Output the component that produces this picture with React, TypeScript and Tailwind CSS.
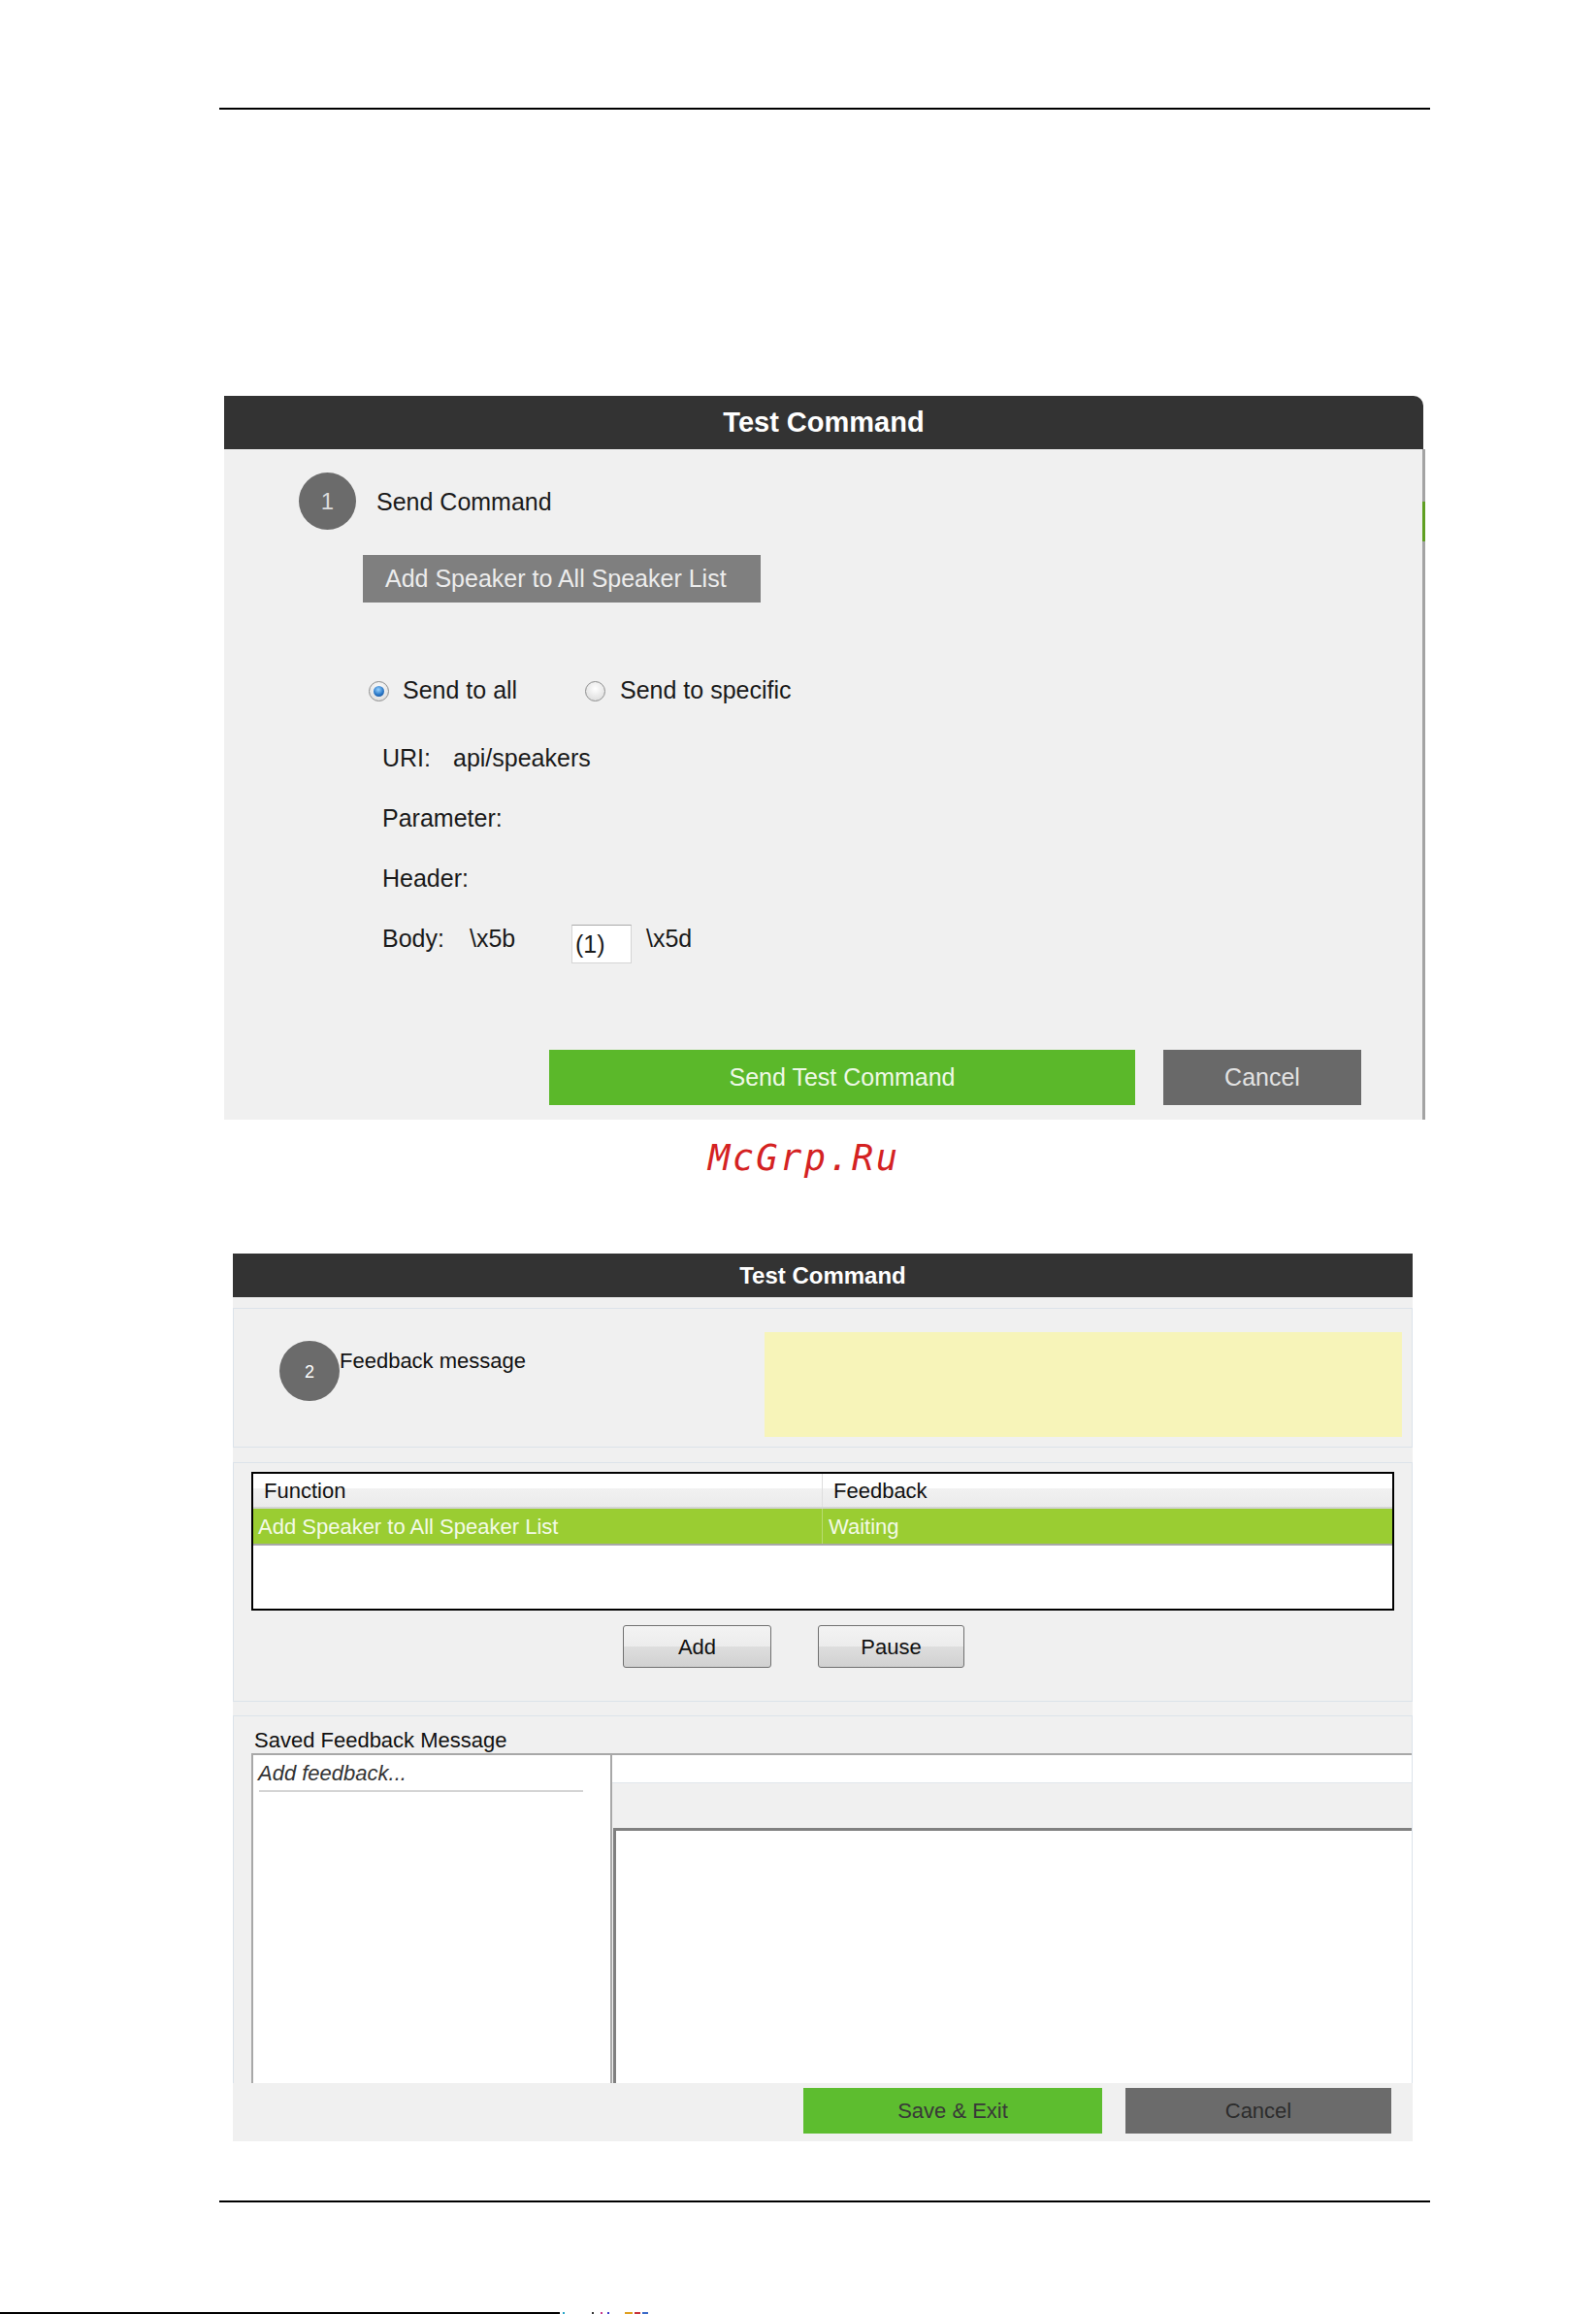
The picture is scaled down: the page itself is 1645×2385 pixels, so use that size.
import React from "react";

function Radio({ checked }: { checked?: boolean }) {
  return (
    <div className="w-[21px] h-[21px] rounded-full border border-[#8e8f8f] bg-[radial-gradient(circle_at_50%_35%,#ffffff,#d6d6d6)] flex items-center justify-center shrink-0">
      {checked && (
        <div className="w-[11px] h-[11px] rounded-full bg-[radial-gradient(circle_at_45%_35%,#9ad4ff,#2a78c8_55%,#0f3f80)]" />
      )}
    </div>
  );
}

function SendCommandDialog() {
  return (
    <div className="ml-[231px] mt-[295px] w-[1239px]">
      <div className="h-[55px] w-[1236px] bg-[#333333] rounded-tr-[10px] flex items-center justify-center text-white font-bold text-[29px]">
        Test Command
      </div>
      <div className="relative h-[691px] w-[1238px] bg-[#f0f0f0] border-r-[3px] border-[#a3a3a3] text-[25px] text-[#1a1a1a]">
        <div className="absolute right-[-3px] top-[54px] w-[3px] h-[41px] bg-[#5f9f22]" />

        {/* step 1 */}
        <div className="pt-[24px] ml-[77px] flex items-center">
          <div className="w-[59px] h-[59px] rounded-full bg-[#6b6b6b] flex items-center justify-center text-[#dcdcdc] text-[24px]">1</div>
          <span className="ml-[21px] leading-[30px]">Send Command</span>
        </div>

        <div className="mt-[26px] ml-[143px] w-[410px] h-[49px] bg-[#7f7f7f] text-[#ececec] pl-[23px] flex items-center">
          Add Speaker to All Speaker List
        </div>

        <div className="mt-[76px] ml-[149px] h-[30px] flex items-center">
          <div className="w-[223px] flex items-center">
            <Radio checked />
            <span className="ml-[14px]">Send to all</span>
          </div>
          <Radio />
          <span className="ml-[15px]">Send to specific</span>
        </div>

        <div className="mt-[40px] ml-[163px] h-[30px] flex items-center">
          <span className="w-[73px]">URI:</span>
          <span>api/speakers</span>
        </div>
        <div className="mt-[31px] ml-[163px] leading-[30px]">Parameter:</div>
        <div className="mt-[32px] ml-[163px] leading-[30px]">Header:</div>

        <div className="mt-[33px] ml-[163px] h-[40px] flex items-start leading-[29px]">
          <span className="w-[90px]">Body:</span>
          <span className="w-[105px]">\x5b</span>
          <div className="w-[62px] h-[40px] bg-white border border-[#d4d4d4] border-t-[#a9a9a9] pl-[3px] pt-[5px]">(1)</div>
          <span className="ml-[15px]">\x5d</span>
        </div>

        <div className="mt-[89px] flex">
          <button className="ml-[335px] w-[604px] h-[57px] bg-[#5bb82a] text-[#eef8e6] text-[25px]">Send Test Command</button>
          <button className="ml-[29px] w-[204px] h-[57px] bg-[#696969] text-[#e2e2e2] text-[25px]">Cancel</button>
        </div>
      </div>
    </div>
  );
}

function FeedbackDialog() {
  return (
    <div className="ml-[240px] mt-[76px] w-[1216px] text-[22px] text-[#111]">
      <div className="h-[45px] bg-[#333333] flex items-center justify-center text-white font-bold text-[24px]">
        Test Command
      </div>
      <div className="h-[870px] bg-[#f0f0f0] pt-[11px] flex flex-col">
        {/* feedback message */}
        <div className="h-[144px] border border-[#dce3ea] flex items-start">
          <div className="ml-[47px] mt-[33px] w-[62px] h-[62px] rounded-full bg-[#6b6b6b] flex items-center justify-center text-white text-[18px] pt-[2px]">
            2
          </div>
          <span className="mt-[41px] leading-[26px]">Feedback message</span>
          <div className="ml-auto mt-[24px] mr-[10px] w-[657px] h-[108px] bg-[#f7f4b9]" />
        </div>

        {/* function list */}
        <div className="mt-[15px] h-[247px] border border-[#dce3ea]">
          <div className="mx-[18px] mt-[9px] h-[143px] border-2 border-black bg-white">
            <div className="flex h-[36px] border-b-2 border-[#d4d4d4] bg-[linear-gradient(#ffffff_0%,#ffffff_45%,#f1f1f1_45%,#ebebeb_100%)]">
              <div className="w-[587px] pl-[11px] border-r border-[#dedede] flex items-center">Function</div>
              <div className="pl-[11px] flex items-center">Feedback</div>
            </div>
            <div className="flex h-[38px] bg-[#9acd32] border-b-2 border-[#a8a8a8] text-[#f3fae6]">
              <div className="w-[587px] pl-[5px] border-r border-[#b9dc72] flex items-center">Add Speaker to All Speaker List</div>
              <div className="pl-[6px] flex items-center">Waiting</div>
            </div>
          </div>
          <div className="mt-[15px] flex">
            <button className="ml-[401px] w-[153px] h-[44px] rounded-[3px] border border-[#707070] bg-[linear-gradient(#f3f3f3_0%,#ececec_50%,#dedede_50%,#d1d1d1_100%)] text-[22px]">Add</button>
            <button className="ml-[48px] w-[151px] h-[44px] rounded-[3px] border border-[#707070] bg-[linear-gradient(#f3f3f3_0%,#ececec_50%,#dedede_50%,#d1d1d1_100%)] text-[22px]">Pause</button>
          </div>
        </div>

        {/* saved feedback */}
        <div className="mt-[14px] flex-1 border-t border-x border-[#dce3ea] flex flex-col overflow-hidden">
          <div className="pl-[21px] pt-[12px] leading-[26px]">Saved Feedback Message</div>
          <div className="flex flex-1">
            <div className="ml-[18px] w-[372px] border-2 border-b-0 border-[#a8a8a8] bg-white">
              <div className="pl-[5px] pt-[6px] italic text-[#333] leading-[26px]">Add feedback...</div>
              <div className="ml-[6px] mt-[4px] w-[334px] h-[2px] bg-[#d4d4d4]" />
            </div>
            <div className="flex-1 flex flex-col">
              <div className="h-[31px] bg-white border-t-2 border-[#a8a8a8] border-b border-b-[#e1e6eb]" />
              <div className="h-[46px]" />
              <div className="flex-1 ml-[1px] bg-white border-t-[3px] border-l-[3px] border-[#808080]" />
            </div>
          </div>
        </div>

        <div className="h-[60px] flex shrink-0">
          <button className="ml-[588px] mt-[5px] w-[308px] h-[47px] bg-[#5dbd2f] text-[#383838] text-[22px]">Save &amp; Exit</button>
          <button className="ml-[24px] mt-[5px] w-[274px] h-[47px] bg-[#6b6b6b] text-[#2c2c2c] text-[22px]">Cancel</button>
        </div>
      </div>
    </div>
  );
}

export default function App() {
  return (
    <div className="w-[1645px] h-[2385px] bg-white overflow-hidden font-['Liberation_Sans',Arial,sans-serif] flex flex-col">
      <div className="ml-[226px] mt-[111px] w-[1248px] h-[2px] bg-black shrink-0" />

      <SendCommandDialog />

      <div className="mt-[18px] ml-[730px] leading-[44px] text-[37px] italic tracking-[2.4px] text-[#d42222] font-['DejaVu_Sans_Mono',monospace]">
        McGrp.Ru
      </div>

      <FeedbackDialog />

      <div className="ml-[226px] mt-[61px] w-[1248px] h-[2px] bg-black shrink-0" />

      <div className="mt-auto flex items-end h-[2px] shrink-0">
        <div className="w-[577px] h-[2px] bg-black" />
        <div className="ml-[3px] w-[2px] h-[2px] bg-[#2aa6c8]" />
        <div className="ml-[28px] w-[2px] h-[2px] bg-[#333]" />
        <div className="ml-[7px] w-[2px] h-[2px] bg-[#c83a8a]" />
        <div className="ml-[5px] w-[2px] h-[2px] bg-[#3a3ac8]" />
        <div className="ml-[16px] w-[8px] h-[2px] bg-[#e0a020]" />
        <div className="ml-[2px] w-[6px] h-[2px] bg-[#c8323a]" />
        <div className="ml-[2px] w-[6px] h-[2px] bg-[#3a6ac8]" />
      </div>
    </div>
  );
}
